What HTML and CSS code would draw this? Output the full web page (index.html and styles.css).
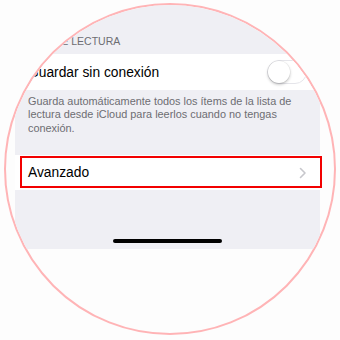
FILE: index.html
```html
<!DOCTYPE html>
<html lang="es">
<head>
<meta charset="utf-8">
<link rel="stylesheet" href="styles.css">
</head>
<body>
<div class="frame">
  <div class="circle">
    <div class="screen">
      <div class="section-header">LISTA DE LECTURA</div>
      <div class="row">
        <span class="label">Guardar sin conexión</span>
        <span class="toggle"><span class="knob"></span></span>
      </div>
      <div class="section-footer">Guarda automáticamente todos los ítems de la lista de lectura desde iCloud para leerlos cuando no tengas conexión.</div>
      <div class="row row-adv">
        <span class="label">Avanzado</span>
        <svg class="chevron" width="8" height="12" viewBox="0 0 8 12"><polyline points="1.5,1.5 6,6 1.5,10.5" fill="none" stroke="#c7c7cc" stroke-width="1.6" stroke-linecap="round" stroke-linejoin="round"/></svg>
        <span class="highlight"></span>
      </div>
      <div class="home-bar"></div>
    </div>
  </div>
</div>
</body>
</html>
```
FILE: styles.css
```css
html, body {
  margin: 0;
  padding: 0;
  background: #fdfdfd;
}
body {
  width: 340px;
  height: 340px;
  overflow: hidden;
  font-family: "Liberation Sans", Arial, sans-serif;
}
.frame {
  padding: 3px 0 0 4px;
}
.circle {
  box-sizing: border-box;
  width: 332px;
  height: 332px;
  border: 2px solid #ffb4b6;
  border-radius: 50%;
  overflow: hidden;
  background: #fdfdfd;
}
.screen {
  margin-left: 9px;
  width: 305px;
  height: 244px;
  background: #efeff4;
  display: flex;
  flex-direction: column;
}
.section-header {
  height: 49px;
  box-sizing: border-box;
  padding: 0 0 6px 8px;
  display: flex;
  align-items: flex-end;
  font-size: 10.5px;
  line-height: 13px;
  color: #6d6d72;
}
.row {
  position: relative;
  height: 36px;
  background: #ffffff;
  display: flex;
  align-items: center;
  justify-content: space-between;
  padding: 0 13px;
}
.label {
  font-size: 13.8px;
  color: #000000;
}
.toggle {
  box-sizing: border-box;
  width: 40px;
  height: 24px;
  border-radius: 12px;
  border: 1.5px solid #e5e5ea;
  background: #ffffff;
  display: flex;
  align-items: center;
}
.knob {
  width: 22px;
  height: 22px;
  border-radius: 50%;
  background: #ffffff;
  box-shadow: 0 1.5px 3px rgba(0,0,0,0.25), 0 0 0 0.5px rgba(0,0,0,0.06);
  margin-left: -0.5px;
}
.section-footer {
  height: 65px;
  box-sizing: border-box;
  padding: 5px 15px 0 13px;
  font-size: 10.9px;
  line-height: 13.4px;
  color: #6d6d72;
}
.row-adv {
  height: 35px;
}
.highlight {
  position: absolute;
  left: 5px;
  top: 1px;
  width: 302px;
  height: 32px;
  box-sizing: border-box;
  border: 2px solid #f20000;
}
.home-bar {
  margin: auto 0 6px 98px;
  width: 109px;
  height: 4.5px;
  border-radius: 3px;
  background: #000000;
}
```
